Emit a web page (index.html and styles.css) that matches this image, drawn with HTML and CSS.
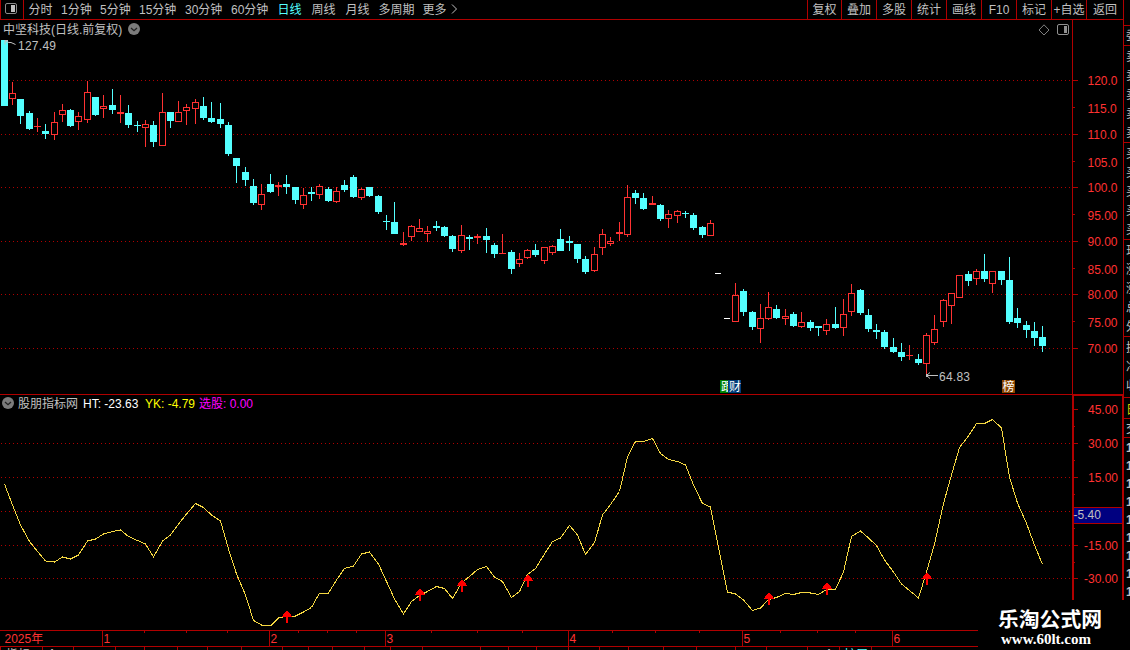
FILE: index.html
```html
<!DOCTYPE html>
<html lang="zh-CN">
<head>
<meta charset="utf-8">
<title>中坚科技</title>
<link rel="stylesheet" href="styles.css">
</head>
<body>
<div class="app">
  <main class="main">
    <header class="toolbar">
      <div class="layout-toggle">
        <svg width="12" height="12" viewBox="0 0 12 12"><rect x=".5" y=".5" width="11" height="10" rx="1.5" fill="none" stroke="#8a8a8a"/><rect x="6" y="2" width="4" height="7" fill="#c0c0c0"/></svg>
      </div>
      <nav class="periods">
        <span>分时</span><span>1分钟</span><span>5分钟</span><span>15分钟</span><span>30分钟</span><span>60分钟</span><span class="active">日线</span><span>周线</span><span>月线</span><span>多周期</span><span>更多</span>
        <svg class="more" width="7" height="10" viewBox="0 0 7 10"><path d="M1 .5L5.5 5L1 9.5" fill="none" stroke="#c0c0c0"/></svg>
      </nav>
      <nav class="tools">
        <span>复权</span><span>叠加</span><span>多股</span><span>统计</span><span>画线</span><span>F10</span><span>标记</span><span>+自选</span><span>返回</span>
      </nav>
    </header>

    <section class="panel price">
      <svg class="plot" id="price" width="1123" height="374" viewBox="0 20 1123 374"></svg>
      <div class="caption">
        <span>中坚科技(日线.前复权)</span>
        <svg class="chev" width="12" height="12" viewBox="0 0 12 12"><circle cx="6" cy="6" r="6" fill="#7c7c7c"/><path d="M3 5L6 7.7L9 5" fill="none" stroke="#222" stroke-width="1.3"/></svg>
        <div class="corner">
          <svg width="12" height="12" viewBox="0 0 12 12"><path d="M6 .8L11 6L6 11L1 6Z" fill="none" stroke="#808080"/></svg>
          <svg width="12" height="12" viewBox="0 0 12 12"><rect x=".5" y=".5" width="11" height="10" rx="1.5" fill="none" stroke="#909090"/><rect x="7" y="2" width="3" height="7" fill="#909090"/></svg>
        </div>
      </div>
    </section>

    <section class="panel indicator">
      <svg class="plot" id="indicator" width="1123" height="235" viewBox="0 395 1123 235"></svg>
      <div class="caption legend">
        <svg class="chev" width="12" height="12" viewBox="0 0 12 12"><circle cx="6" cy="6" r="6" fill="#7c7c7c"/><path d="M3 5L6 7.7L9 5" fill="none" stroke="#222" stroke-width="1.3"/></svg>
        <span class="name">股朋指标网</span><span class="ht">HT: -23.63</span><span class="yk">YK: -4.79</span><span class="pick">选股: 0.00</span>
      </div>
    </section>

    <footer class="timeline">
      <svg class="plot" id="timeline" width="1123" height="20" viewBox="0 630 1123 20"></svg>
    </footer>
  </main>

  <aside class="quotes">
    <div class="q gap"></div>
    <div class="q ratio"><p>委</p></div>
    <div class="q book"><p>卖</p><p>卖</p><p>卖</p><p>卖</p><p>卖</p></div>
    <div class="q book bids"><p>买</p><p>买</p><p>买</p><p>买</p><p>买</p></div>
    <div class="q stats"><p>现</p><p>涨</p><p>涨</p><p>总</p><p>外</p></div>
    <div class="q extra"><p>换</p><p>净</p><p>收</p></div>
    <div class="q tab"><p>日</p></div>
    <div class="q trade"><p>交</p></div>
    <div class="q ticks"><p>1</p><p>1</p><p>1</p><p>1</p><p>1</p><p>1</p><p>1</p><p>1</p><p>1</p></div>
  </aside>

  <div class="watermark"><strong>乐淘公式网</strong><b>www.60lt.com</b></div>
</div>
<script src="chart.js"></script>
</body>
</html>
```
FILE: styles.css
```css
* { box-sizing: border-box; }
body {
  margin: 0;
  background: #000;
  color: #c0c0c0;
  font: 12px/14px "Liberation Sans", "Noto Sans CJK SC", sans-serif;
  overflow: hidden;
}
p { margin: 0; }
svg { display: block; flex: none; }
.app {
  position: relative;
  width: 1130px;
  height: 650px;
  overflow: hidden;
  display: grid;
  grid-template-columns: 1123px 7px;
}
.main {
  display: grid;
  grid-template-rows: 20px 374px 236px 20px;
  height: 650px;
}
.toolbar {
  display: flex;
  border-bottom: 1px solid #b00000;
  white-space: nowrap;
}
.layout-toggle {
  width: 24px;
  padding: 3px 0 0 4px;
  border-right: 1px solid #b00000;
  border-left: 1px solid #b00000;
}
.periods {
  display: grid;
  grid-template-columns: 32.5px 39px 39px 46px 46px 46.5px 34px 34px 33px 44px 28px 8px;
  padding: 3px 0 0 4.5px;
}
.periods .active { color: #54ffff; }
.more { margin-top: 1px; }
.tools {
  margin-left: auto;
  display: grid;
  grid-template-columns: 34px 35px 35px 35px 35px 35px 35px 35px 37px;
  text-align: center;
}
.tools span { border-left: 1px solid #b00000; padding-top: 3px; }
.panel { position: relative; }
.plot { position: absolute; left: 0; top: 0; }
.plot text { font: 12px "Liberation Sans", "Noto Sans CJK SC", sans-serif; }
.timeline { position: relative; }
.caption {
  position: relative;
  display: flex;
  align-items: flex-start;
  padding: 3px 0 0 3px;
  white-space: nowrap;
}
.caption .chev { margin: 0 0 0 6px; }
.corner { display: flex; gap: 7px; margin: 1px 54px 0 auto; }
.indicator { border-top: 1px solid #b00000; }
.legend { padding: 2px 0 0 2px; }
.legend .chev { margin: 0 4px 0 0; }
.legend .name { width: 65px; }
.legend .ht { width: 62px; color: #fff; }
.legend .yk { width: 54px; color: #ff0; }
.legend .pick { color: #f0f; }

.quotes {
  border-left: 1px solid #b00000;
  padding-left: 2px;
  overflow: hidden;
  display: flex;
  flex-direction: column;
}
.q { flex: none; margin-left: -2px; padding-left: 2px; border-bottom: 1px solid #b00000; overflow: hidden; }
.q p { width: 14px; }
.gap { height: 26px; }
.ratio { height: 20px; padding-top: 3px; }
.book { height: 97px; padding-top: 4px; }
.book p { height: 19px; }
.stats { height: 97px; padding-top: 4px; }
.stats p { height: 19px; }
.extra { height: 61px; padding-top: 4px; }
.extra p { height: 19px; }
.tab { height: 21px; padding-top: 5px; color: #d0d000; }
.trade { height: 19px; padding-top: 3px; }
.ticks { border: 0; padding-top: 3px; font-weight: bold; }
.ticks p { height: 18px; }

.watermark {
  position: absolute;
  left: 978px;
  top: 600px;
  width: 152px;
  height: 50px;
  background: #000;
  color: #fff;
  padding: 6px 0 0 20px;
  white-space: nowrap;
}
.watermark strong {
  display: block;
  font: bold 20.8px/24px "Noto Sans CJK SC", sans-serif;
}
.watermark b {
  display: block;
  margin: 1px 0 0 3px;
  font: bold 15px/17px "Liberation Serif", serif;
}
```
FILE: chart.js
```js
// Each candle: colour (r = up, c = down, w = unchanged), high, body top, body bottom, low.
const candles = `c40,40,106,106 r82,93,99,105 c99,99,116,124 c111,113,129,130 r118,126,127,132 c124,131,134,139 r112,122,135,140
r104,110,115,122 c109,110,126,127 r112,116,122,130 r81,92,120,123 c97,97,115,116 r95,106,109,118 c89,105,110,114 r95,112,114,123
c105,113,125,128 c121,125,126,132 r120,124,128,147 c121,125,142,147 r93,112,146,146 c112,112,121,128 r101,112,122,122 r104,107,111,125
r99,102,109,124 c97,106,118,120 c102,118,122,123 c103,119,124,128 c122,125,154,156 c158,158,166,183 c167,172,180,186 c179,186,203,205
r184,194,205,210 c174,184,192,193 r182,185,187,196 c175,184,187,194 c187,187,200,204 r188,195,205,209 c187,192,194,201 r184,186,195,199
c187,189,201,202 r187,191,202,203 c180,185,190,192 c175,177,197,198 r188,189,198,200 c187,187,196,197 c195,196,212,214 c215,221,222,230
c202,222,234,234 r232,243,245,246 r225,226,237,241 r219,228,232,232 r226,231,234,242 c221,226,228,231 c226,227,236,237 c235,236,249,252
r225,235,251,253 c235,237,239,250 r234,236,238,244 c228,236,240,253 c243,245,254,258 r234,253,254,254 c250,252,269,274 r253,259,264,267
r249,250,258,259 c244,250,255,257 r247,247,261,264 r245,246,253,255 c229,239,251,251 c236,241,243,251 c244,244,259,263 c256,259,272,274
r247,254,271,272 r229,234,248,255 r237,241,244,246 r222,232,234,241 r185,197,235,237 c190,193,198,204 c193,198,209,210 r196,203,205,205
c204,205,219,221 r210,214,219,228 r210,211,216,223 c211,213,214,218 c213,215,228,230 c226,227,235,238 r220,223,236,236 w273,273,274,274
w318,318,319,319 r283,295,322,322 c289,291,312,316 c311,312,327,330 r304,318,329,343 r292,307,319,320 c305,309,318,319 r309,316,319,325
c312,314,326,327 r312,322,327,328 c320,322,328,331 c326,326,328,336 r319,324,331,335 c307,324,328,329 r299,314,328,336 r284,293,312,316
c289,290,313,315 c309,315,329,332 c324,330,332,339 c330,332,347,349 c338,347,352,353 c343,352,357,361 r345,355,356,360 c354,359,363,365
r333,335,364,374 r315,329,343,345 r299,300,322,327 r293,293,306,324 r275,275,298,298 c271,274,281,286 r269,271,279,285 c254,271,279,282
r271,271,284,293 c271,271,280,285 c257,280,322,324 c308,318,323,328 c321,325,330,338 c322,331,338,346 c326,337,346,352`.split(/\s+/);

const curve = [484,505,525,541.5,551.5,561,562,557,559,555,541,539,534,531.5,530,536.5,540.5,544,557,541,535,524,514,503.5,507.5,515,521,549,574,595,620.5,
625,626,618,616,616,612,607.5,593,593,580,568.5,566,554,552,564,581.5,599,614,601.5,595.5,591.5,586.5,588.5,598.5,583,576.5,569.5,566.5,577,581.5,597.5,
591.5,574.5,568.5,554,541.5,538,525.5,535,554.5,542.5,515,504.5,491.5,457,441.5,441.5,438.5,453.5,459.5,461.5,465,485,503.5,507,547,592,594,600,610.5,
608,599.5,597.5,593.5,594.5,592.5,593,594.5,589.5,589.5,572,536.5,531,538,545.5,560,572,584,590.5,598,572,544,503.5,475,447.5,436,423.5,423.5,419.5,
428,477,503,523.5,545,564.5];

const colours = { r: '#ff3232', c: '#54ffff', w: '#ffffff' };
const border = '#b00000';
const xOf = i => Math.floor(4.2 + 8.309 * i);
const rect = (x, y, w, h, fill) => `<rect x="${x}" y="${y}" width="${w}" height="${h}" fill="${fill}"/>`;
const text = (x, y, s, fill, extra = '') => `<text x="${x}" y="${y}" fill="${fill}" ${extra}>${s}</text>`;
const grid = y => `<path d="M1 ${y + .5}H1071" stroke="#b00000" stroke-dasharray="1 3" shape-rendering="crispEdges"/>`;

function drawPrice() {
  let s = [80, 134, 187, 241, 294, 348].map(grid).join('');
  candles.forEach((c, i) => {
    const col = colours[c[0]];
    const [hi, top, bot, low] = c.slice(1).split(',').map(Number);
    const x = xOf(i);
    if (c[0] === 'w') { s += rect(x - 3, top, 6, 1, col); return; }
    s += rect(x, hi, 1, low - hi, col) + rect(x - 3, top, 7, bot - top, col);
    if (c[0] === 'r' && bot - top > 2) s += rect(x - 2, top + 1, 5, bot - top - 2, '#000');
  });
  s += rect(1072, 20, 1, 374, border);
  [80, 134, 187, 241, 294, 348].forEach(y => s += rect(1073, y, 5, 1, border));
  [107, 161, 214, 268, 321].forEach(y => s += rect(1073, y, 2, 1, border));
  [['120.0', 85], ['115.0', 113], ['110.0', 139], ['105.0', 167], ['100.0', 192], ['95.00', 220], ['90.00', 246],
   ['85.00', 274], ['80.00', 299], ['75.00', 327], ['70.00', 353]]
    .forEach(([v, y]) => s += text(1087.5, y, v, '#ff3232'));
  s += '<path d="M5 44.5V40.5H8M5.5 41.5L9 42.5H11L15.5 44.5" fill="none" stroke="#c0c0c0"/>';
  s += text(18, 50, '127.49', '#c0c0c0', 'textLength="38"');
  s += '<path d="M930 372.5L926.5 375.5L930 378.5M926 375.5H938" fill="none" stroke="#c0c0c0"/>' + rect(926, 374, 2, 3, '#c0c0c0');
  s += text(939, 381, '64.83', '#c0c0c0', 'textLength="31"');
  s += rect(720, 380, 13, 13, '#008000') + text(721, 391, '跟', '#fff');
  s += rect(728, 380, 13, 13, '#003c78') + text(729, 391, '财', '#fff');
  s += rect(1002, 380, 13, 13, '#8c4600') + text(1002.5, 391, '榜', '#fff');
  document.getElementById('price').innerHTML = s;
}

function drawIndicator() {
  let s = [443, 477, 511, 545, 578].map(grid).join('');
  s += `<polyline fill="none" stroke="#f5d742" shape-rendering="crispEdges" points="${curve.map((y, i) => `${xOf(i) + .5},${y}`).join(' ')}"/>`;
  // Buy signals: stepped arrow head above a two pixel stem.
  [[34, 611], [50, 589], [55, 580], [63, 575], [92, 593], [99, 583], [111, 573]].forEach(([i, y]) => {
    const x = xOf(i) + 1;
    [1, 2, 3, 4, 4, 5].forEach((half, row) => s += rect(x - half, y + row, half * 2, 1, '#f00'));
    s += rect(x - 1, y + 6, 2, 6, '#f00');
  });
  s += rect(1072, 395, 2, 205, border) + rect(1122, 395, 1, 205, border) + rect(1072, 395, 51, 1, border);
  [409, 443, 477, 545, 578].forEach(y => s += rect(1074, y, 4, 1, border));
  [426, 460, 494, 528, 562].forEach(y => s += rect(1074, y, 1, 1, border));
  [['45.00', 414], ['30.00', 448], ['15.00', 482], ['-15.00', 550], ['-30.00', 583]]
    .forEach(([v, y]) => s += text(1118, y, v, '#ff3232', 'text-anchor="end"'));
  s += rect(1074, 507, 48, 17, border) + rect(1074, 508, 48, 15, '#000080') + text(1073.5, 519, '-5.40', '#c0c0c0');
  document.getElementById('indicator').innerHTML = s;
}

function drawTimeline() {
  let s = rect(0, 630, 978, 1, border) + rect(0, 646, 978, 1, border);
  s += text(4.5, 643, '2025年', '#ff3232');
  [102, 269, 385, 568, 742, 892].forEach((x, i) => s += rect(x, 630, 1, 17, border) + text(x + 1.5, 643, i + 1, '#ff3232'));
  [144, 186, 227, 298, 327, 356, 431, 477, 522, 612, 655, 699, 780, 817, 855].forEach(x => s += rect(x, 631, 1, 2, border));
  [0, 42, 73, 115, 144, 177, 207, 241, 282, 308, 332, 364, 390, 422, 480, 508, 536, 568, 599, 628, 663, 696, 735, 766, 807, 839, 871]
    .forEach(x => s += rect(x, 647, 1, 3, border));
  s += text(6, 659, '指标', '#c0c0c0') + text(48, 658, 'A', '#c0c0c0') + text(825, 658, 'A', '#c0c0c0') + text(844, 659, '扩展', '#54ffff');
  document.getElementById('timeline').innerHTML = s;
}

drawPrice();
drawIndicator();
drawTimeline();
```
